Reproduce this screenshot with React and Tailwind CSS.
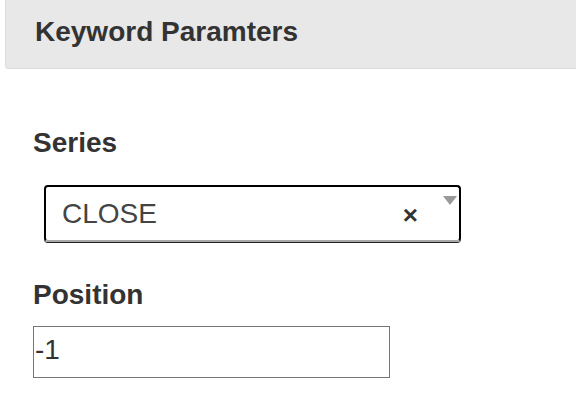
import React from 'react';

export default function App() {
  return (
    <div className="w-[576px] h-[405px] bg-white overflow-hidden text-[#333]" style={{ fontFamily: '"Liberation Sans", Arial, sans-serif' }}>
      <div className="ml-[5px] h-[69px] bg-[#e8e8e8] border border-[#dcdcdc] border-r-0 border-t-0 rounded-bl-[4px] pl-[29px] pt-[16px]">
        <h3 className="text-[28px] font-bold leading-[32px]">Keyword Paramters</h3>
      </div>

      <div className="pl-[33px]">
        <label className="block mt-[58px] text-[28px] font-bold leading-[32px]">Series</label>

        <div className="relative mt-[26px] ml-[11px] w-[417px] h-[57px] border-2 border-black border-b-[#a8a8a8] rounded-[4px] flex items-center pl-[16px] pr-[12px] shadow-[0_1px_0_#222]">
          <span className="text-[28px] leading-[32px] text-[#444] flex-1">CLOSE</span>
          <span className="text-[26px] font-bold leading-none text-[#333] mr-[29px] mt-[2px]">×</span>
          <svg className="absolute right-[1px] top-[9px]" width="16" height="10" viewBox="0 0 16 10">
            <polygon points="1,0 15,0 8,9" fill="#999" />
          </svg>
        </div>

        <label className="block mt-[37px] text-[28px] font-bold leading-[32px]">Position</label>

        <div className="mt-[15px] w-[357px] h-[52px] border border-[#767676] flex items-center pl-[1px]">
          <span className="text-[28px] leading-[32px] text-[#333] mt-[-4px]">-1</span>
        </div>
      </div>
    </div>
  );
}
